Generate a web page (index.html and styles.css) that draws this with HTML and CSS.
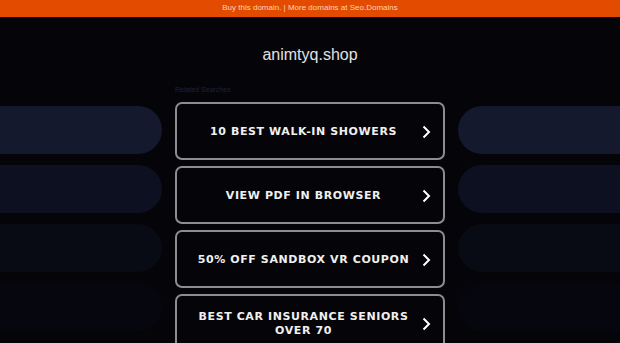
FILE: index.html
```html
<!DOCTYPE html>
<html>
    <head>
        <title>animtyq.shop</title>

        <link rel="stylesheet" href="styles.css">
    </head>

    <body>
        <div class="top-bar">
            Buy this domain. | More domains at Seo.Domains
        </div>

        <h1 class="domain">animtyq.shop</h1>

        <div class="content">
            <div class="side side-left">
                <div class="pill pill-1"></div>
                <div class="pill pill-2"></div>
                <div class="pill pill-3"></div>
                <div class="pill pill-4"></div>
            </div>

            <div class="links">
                <p class="links-title">Related Searches</p>

                <a class="link-btn" href="#">
                    <span class="link-text">10 Best Walk-in Showers</span>
                    <svg class="chevron" width="9" height="14" viewBox="0 0 9 14">
                        <polyline points="1.5,1.5 7,7 1.5,12.5" />
                    </svg>
                </a>
                <a class="link-btn" href="#">
                    <span class="link-text">View PDF in Browser</span>
                    <svg class="chevron" width="9" height="14" viewBox="0 0 9 14">
                        <polyline points="1.5,1.5 7,7 1.5,12.5" />
                    </svg>
                </a>
                <a class="link-btn" href="#">
                    <span class="link-text">50% Off Sandbox VR Coupon</span>
                    <svg class="chevron" width="9" height="14" viewBox="0 0 9 14">
                        <polyline points="1.5,1.5 7,7 1.5,12.5" />
                    </svg>
                </a>
                <a class="link-btn" href="#">
                    <span class="link-text">Best Car Insurance Seniors Over 70</span>
                    <svg class="chevron" width="9" height="14" viewBox="0 0 9 14">
                        <polyline points="1.5,1.5 7,7 1.5,12.5" />
                    </svg>
                </a>
            </div>

            <div class="side side-right">
                <div class="pill pill-1"></div>
                <div class="pill pill-2"></div>
                <div class="pill pill-3"></div>
                <div class="pill pill-4"></div>
            </div>
        </div>
    </body>
</html>
```

FILE: styles.css
```css
body {
    margin: 0;
    height: 343px;
    overflow: hidden;

    font-family: "Liberation Sans", Arial, sans-serif;
    color: white;
    background-color: rgb(5, 5, 9);
}

.top-bar {
    height: 17px;
    line-height: 16px;
    text-align: center;

    font-size: 8px;
    color: rgb(250, 210, 180);
    background-color: rgb(227, 76, 0);
}

.domain {
    margin: 27px 0 0;
    height: 22px;
    line-height: 22px;
    text-align: center;

    font-size: 16px;
    font-weight: normal;
    color: rgb(225, 225, 228);
}

.content {
    display: flex;
    gap: 13px;
    margin-top: 19px;
}

.side {
    display: flex;
    flex-direction: column;
    gap: 11px;
    width: 162px;
    padding-top: 21px;
}

.pill {
    height: 48px;
}

.side-left .pill {
    border-radius: 0 24px 24px 0;
}

.side-right .pill {
    border-radius: 24px 0 0 24px;
}

.pill-1 {
    background-color: rgb(20, 25, 45);
}

.pill-2 {
    background-color: rgb(13, 16, 32);
}

.pill-3 {
    background-color: rgb(8, 10, 20);
}

.pill-4 {
    background-color: rgb(5, 6, 14);
}

.links {
    display: flex;
    flex-direction: column;
    gap: 6px;
    width: 270px;
}

.links-title {
    margin: 0 0 1px;
    height: 10px;
    line-height: 10px;

    font-size: 7px;
    color: rgb(30, 32, 64);
}

.link-btn {
    display: flex;
    align-items: center;
    gap: 8px;
    box-sizing: border-box;
    height: 58px;
    padding: 1px 12px 0 16px;

    border: 2px solid rgb(140, 140, 145);
    border-radius: 7px;
    text-decoration: none;
}

.link-text {
    flex: 1;
    text-align: center;

    font-family: "DejaVu Sans", Verdana, sans-serif;
    font-size: 11px;
    font-weight: bold;
    letter-spacing: 0.6px;
    line-height: 14px;
    text-transform: uppercase;
    color: rgb(240, 240, 240);
}

.chevron {
    flex: none;
    fill: none;
    stroke: white;
    stroke-width: 2;
}
```
